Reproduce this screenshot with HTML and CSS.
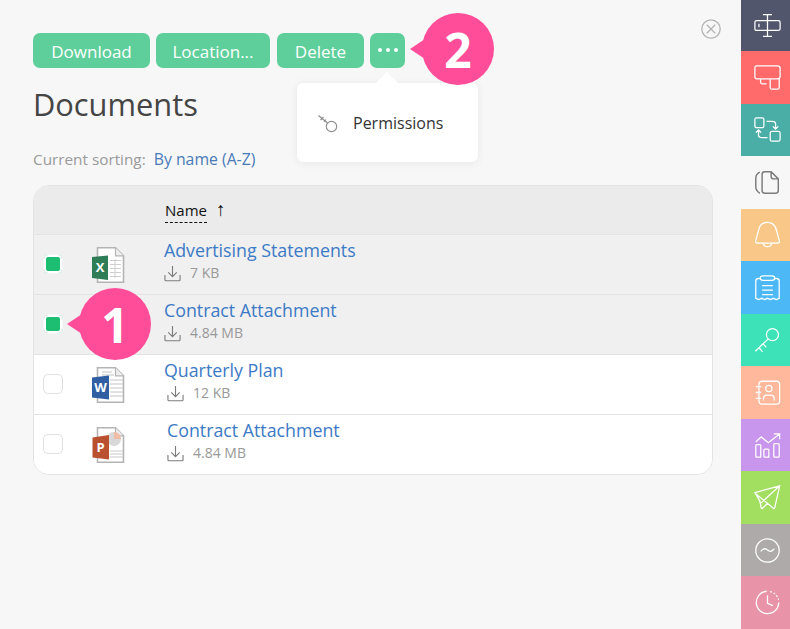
FILE: index.html
```html
<!DOCTYPE html>
<html lang="en">
<head>
<meta charset="utf-8">
<title>Documents</title>
<link rel="stylesheet" href="styles.css">
</head>
<body>
<svg class="defs" width="0" height="0" aria-hidden="true">
  <symbol id="dl" viewBox="0 0 18 18"><path d="M9 1v11M4.500 7.800 9 12.300l4.500-4.500M1 10.500v5.200q0 1 1 1h14q1 0 1-1v-5.200" fill="none" stroke="#7d7d7d" stroke-width="1.200"/></symbol>
  <symbol id="page" viewBox="0 0 36 38"><path d="M7.500 .8h18l8 8v26.400h-26z" fill="#fff" stroke="#b4b4b4" stroke-width="1.600"/><path d="M25.500 .8v8h8" fill="#eee" stroke="#b4b4b4" stroke-width="1.200"/></symbol>
</svg>
<main class="main">
  <div class="toolbar">
    <button class="btn btn-download">Download</button>
    <button class="btn btn-location">Location...</button>
    <button class="btn btn-delete">Delete</button>
    <button class="btn btn-more" aria-label="More"><span class="dot"></span><span class="dot"></span><span class="dot"></span></button>
  </div>
  <h1 class="title">Documents</h1>
  <p class="sorting"><span class="sorting-label">Current sorting:</span><a class="sorting-value">By name (A-Z)</a></p>
  <section class="table">
    <div class="thead"><span class="th-name">Name</span><span class="th-arrow">↑</span></div>
    <div class="row row-selected">
      <span class="check check-on"></span>
      <svg class="fileicon" viewBox="0 0 36 38"><use href="#page"/><g stroke="#cfcfcf"><path d="M20 13.500h11M20 17.500h11M20 21.500h11M20 25.500h11M20 29.500h11M25 12v19"/></g><path d="M2 10 18 8.500v24.500L2 31z" fill="#2f7d56"/><text class="filetext" x="10" y="24.500">X</text></svg>
      <div class="info"><a class="name">Advertising Statements</a><div class="meta"><svg class="dl"><use href="#dl"/></svg><span>7 KB</span></div></div>
    </div>
    <div class="row row-selected">
      <span class="check check-on"></span>
      <span class="fileicon"></span>
      <div class="info"><a class="name">Contract Attachment</a><div class="meta"><svg class="dl"><use href="#dl"/></svg><span>4.84 MB</span></div></div>
    </div>
    <div class="row">
      <span class="check"></span>
      <svg class="fileicon" viewBox="0 0 36 38"><use href="#page"/><g stroke="#c4c4c4"><path d="M12 5h10M12 8h12M20 13h13M20 17h13M20 21h13M20 25h13M20 29h13"/></g><path d="M2 10.500 19 8.500v24L2 30.500z" fill="#2f5ea3"/><text class="filetext" x="10.500" y="24.500">W</text></svg>
      <div class="info"><a class="name">Quarterly Plan</a><div class="meta meta-shift"><svg class="dl"><use href="#dl"/></svg><span>12 KB</span></div></div>
    </div>
    <div class="row row-last">
      <span class="check"></span>
      <svg class="fileicon" viewBox="0 0 36 38"><use href="#page"/><circle cx="24" cy="12" r="7" fill="#d8d8d8"/><path d="M24 5a7 7 0 0 1 7 7h-7z" fill="#f2bda6"/><path d="M20 24h13M20 27h13M20 30h13" stroke="#c9c9c9"/><path d="M2.500 10.500 19 8v24.500L2.500 30.500z" fill="#b9502f"/><text class="filetext" x="10.500" y="25">P</text></svg>
      <div class="info info-shift"><a class="name">Contract Attachment</a><div class="meta"><svg class="dl"><use href="#dl"/></svg><span>4.84 MB</span></div></div>
    </div>
  </section>
</main>
<nav class="sidebar">
  <a class="tab t1"><svg viewBox="0 0 30 30"><path d="M3 9.500h24q2 0 2 2v7q0 2-2 2H3q-2 0-2-2v-7q0-2 2-2zM15 3v24M10 3h10M10 27h10M5.500 13v4"/></svg></a>
  <a class="tab t2"><svg viewBox="0 0 30 30"><path d="M3 2h23q3 0 3 2.500V14q0 2.500-3 2.500H3q-2 0-2-2.500V4.500Q1 2 3 2zM18 16.500V26q0 2 2 2h6q2 0 2-2v-9.500M7.300 16.500v3.500q0 2 2 2h4.700"/></svg></a>
  <a class="tab t3"><svg viewBox="0 0 30 30"><path d="M3 2h6q2 0 2 2v7q0 2-2 2H3q-2 0-2-2V4q0-2 2-2zM20 17h7q2 0 2 2v7q0 2-2 2h-7q-2 0-2-2v-7q0-2 2-2zM14 6h6q4 0 4 3v5M21 11.500l3 3 3-3M15 24H9q-4 0-4-3v-5M2 18.500l3-3 3 3"/></svg></a>
  <a class="tab t4"><svg viewBox="0 0 30 30"><path d="M12 3h7l8 8v13q0 3-3 3H12q-3 0-3-3V6q0-3 3-3zM19 3v5q0 3 3 3h5M6.500 3.500Q2 6 2 10v10q0 4 4.500 7"/></svg></a>
  <a class="tab t5"><svg viewBox="0 0 30 30"><path d="M15 1.500c6 0 9 4 10 9l3 11q1 3-2 3H4q-3 0-2-3l3-11c1-5 4-9 10-9zM10 24.500q1 4 5 4t5-4"/></svg></a>
  <a class="tab t6"><svg viewBox="0 0 30 30"><path d="M7 5H5Q2 5 2 8v19l3.200 1.300L8.500 27l3.200 1.300L15 27l3.300 1.300L21.500 27l3.300 1.300L28 27V8q0-3-3-3h-2M10 2h10q3 0 3 2.500T20 7H10Q7 7 7 4.500T10 2zM9 13h12M9 18h12M9 23h12"/></svg></a>
  <a class="tab t7"><svg viewBox="0 0 30 30"><circle cx="20.500" cy="8.500" r="6.700"/><path d="M15.500 13.500 1.500 27M5.500 23l4 4.500M10 18.500l3.500 4"/></svg></a>
  <a class="tab t8"><svg viewBox="0 0 30 30"><path d="M5.500 6q0-3.500 3.500-3.500h16q3.500 0 3.500 3.500v18.500q0 3.500-3.500 3.500H9q-3.500 0-3.500-3.500zM2 8.500h6M2 15h6M2 21.500h6"/><circle cx="16.500" cy="10.500" r="3.500"/><path d="M10.500 24v-2q0-4 4-4h4q4 0 4 4v2"/></svg></a>
  <a class="tab t9"><svg viewBox="0 0 30 30"><path d="M2 11 8 5.500l8 6.500L28 2.500M22 2h6.500v6M3 14h3.500q1 0 1 1v13H3q-1 0-1-1V15q0-1 1-1zM12 19h3.500q1 0 1 1v8H12q-1 0-1-1v-7q0-1 1-1zM23 13h3.500q1.500 0 1.500 1.500V27q0 1-1 1h-4q-1 0-1-1V14q0-1 1-1z"/></svg></a>
  <a class="tab t10"><svg viewBox="0 0 30 30"><path d="M1 9.500 28.500 2 23 26.500q-.5 1.500-1.500.5L15 21.500l-5.500 5.500q-1 1-1.500-.5L6.500 19zM28.500 2 8 21M15 21.500 1.500 10.500"/></svg></a>
  <a class="tab t11"><svg viewBox="0 0 30 30"><circle cx="15" cy="15" r="13"/><path d="M7.500 16q3.500-5 7.500-1.500t7.500-1.500"/></svg></a>
  <a class="tab t12"><svg viewBox="0 0 30 30"><path d="M14 2.500A12.500 12.500 0 1 0 27.500 15"/><path class="dotted" d="M18 2.900A12.500 12.500 0 0 1 27.300 12"/><path d="M15 7v9l6 2.500"/></svg></a>
</nav>
<svg class="close" viewBox="0 0 20 20"><circle cx="10" cy="10" r="9.200"/><path d="M5.800 5.800l8.400 8.400M14.200 5.800l-8.400 8.400"/></svg>
<div class="menu">
  <svg class="menu-key" viewBox="0 0 21 19"><circle cx="14.500" cy="12.500" r="5.200"/><path d="M10.500 9 1.500 1.500M3.500 6l3-3M7 8l2-2.500"/></svg>
  <span class="menu-label">Permissions</span>
</div>
<div class="badge badge-1">1</div>
<div class="badge badge-2">2</div>
</body>
</html>
```
FILE: styles.css
```css
* { box-sizing: border-box; }
html, body { height: 100%; }
body {
  margin: 0;
  height: 629px;
  overflow: hidden;
  display: flex;
  background: #f7f7f7;
  font-family: "Open Sans", "Noto Sans", sans-serif;
  color: #444;
}
.defs { position: absolute; }
.main { flex: 1; padding: 33px 28px 0 33px; min-width: 0; }
.toolbar { display: flex; height: 35px; }
.btn {
  height: 35px;
  border: 0;
  border-radius: 7px;
  background: #5ecf9a;
  color: #fff;
  font: 17px "Open Sans", sans-serif;
  padding: 1px 0 0;
}
.btn-download { width: 117px; margin-right: 6px; }
.btn-location { width: 114px; margin-right: 7px; }
.btn-delete { width: 87px; margin-right: 6px; }
.btn-more { width: 35px; display: flex; align-items: center; justify-content: center; gap: 4px; padding: 0 0 1px; }
.dot { width: 4px; height: 4px; border-radius: 50%; background: #fff; }
.title { margin: 15px 0 0; font-size: 30.800px; font-weight: 400; line-height: 42px; color: #454545; }
.sorting { margin: 24px 0 0; font-size: 15.300px; line-height: 20px; height: 36px; }
.sorting-label { color: #9a9a9a; margin-right: 8px; }
.sorting-value { color: #4a7ab8; font-size: 15.800px; }
.table { border: 1px solid #e3e3e3; border-radius: 16px; overflow: hidden; background: #fff; }
.thead { height: 49px; background: #ebebeb; padding: 14px 0 0 131px; display: flex; align-items: flex-start; border-bottom: 1px solid #e3e3e3; font-size: 15px; color: #111; }
.th-name { border-bottom: 1px dashed #111; line-height: 20px; height: 23px; }
.th-arrow { margin-left: 9px; line-height: 18px; font-size: 19px; font-weight: 300; }
.row { height: 60px; display: flex; border-bottom: 1px solid #e3e3e3; background: #fff; }
.row-selected { background: #f0f0f0; }
.row-last { height: 59px; border-bottom: 0; }
.check { flex: none; width: 20px; height: 20px; margin: 19px 0 0 9px; border: 1px solid #e2e2e2; border-radius: 5px; background: #fff; }
.check-on { background: #1dbd72; border-color: #f5f5f5; box-shadow: inset 0 0 0 2px #fff; border-radius: 5px; }
.fileicon { flex: none; display: block; width: 36px; height: 38px; margin: 12px 38px 0 27px; }
.filetext { font: 700 13px "Open Sans", sans-serif; fill: #fff; text-anchor: middle; }
.info { padding-top: 2px; }
.info-shift { margin-left: 3px; }
.name { display: block; color: #3c7ac6; font-size: 17.800px; line-height: 27px; }
.meta { display: flex; align-items: center; gap: 9px; color: #999; font-size: 14px; line-height: 18px; }
.meta-shift { margin-left: 3px; }
.dl { width: 17px; height: 17px; }
.sidebar { flex: none; width: 49px; height: 629px; display: flex; flex-direction: column; }
.tab { flex: 1; display: flex; align-items: center; justify-content: center; padding-left: 3px; }
.tab svg { width: 27px; height: 27px; fill: none; stroke: #fff; stroke-width: 1.400; }
.dotted { stroke-dasharray: 2 2; }
.t1 { background: #52566c; flex: none; height: 51px; }
.t2 { background: #ff6b6b; }
.t3 { background: #4aaea6; }
.t4 { background: #f7f7f7; }
.t4 svg { stroke: #7b7b7b; stroke-width: 1.600; }
.t5 { background: #f9c888; }
.t6 { background: #4cb8f5; }
.t7 { background: #3de2b8; }
.t8 { background: #ffb89c; }
.t9 { background: #c896ec; }
.t10 { background: #a2de60; }
.t11 { background: #aeaaaa; }
.t12 { background: #e893a8; }
.close { position: absolute; left: 701px; top: 19px; width: 20px; height: 20px; fill: none; stroke: #b4b4b4; stroke-width: 1.300; }
.menu { position: absolute; left: 297px; top: 83px; width: 181px; height: 79px; padding: 1px 0 0 20px; background: #fff; border-radius: 6px; box-shadow: 0 1px 8px rgba(0,0,0,.07); display: flex; align-items: center; }
.menu::before { content: ""; position: absolute; left: 79px; top: -11px; border: 11px solid transparent; border-top: 0; border-bottom-color: #fff; }
.menu-key { width: 21px; height: 19px; fill: none; stroke: #8f8f8f; stroke-width: 1.200; margin-right: 15px; }
.menu-label { font-size: 16px; color: #333; }
.badge { position: absolute; width: 72px; height: 72px; border-radius: 50%; background: #ff4d9a; color: #fff; font-size: 48px; font-weight: 700; display: flex; align-items: center; justify-content: center; }
.badge::before { content: ""; position: absolute; left: -12px; top: 20px; border: 16px solid transparent; border-left: 0; border-right: 24px solid #ff4d9a; }
.badge-1 { left: 79px; top: 288px; }
.badge-2 { left: 422px; top: 13px; }
```
